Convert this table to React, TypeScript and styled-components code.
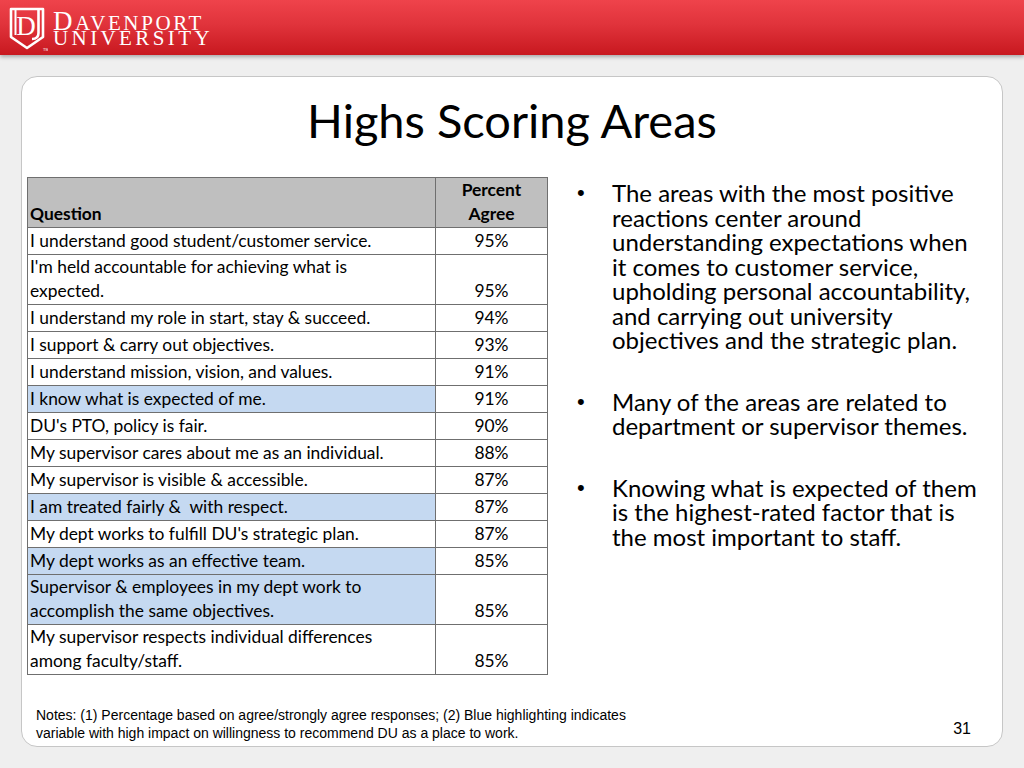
import React from "react";
import styled, { createGlobalStyle } from "styled-components";

const GlobalStyle = createGlobalStyle`
  html, body {
    margin: 0;
    padding: 0;
    background: #efefef;
  }
`;

interface Row {
  question: string[];
  percent: string;
  highlight?: boolean;
}

const rows: Row[] = [
  { question: ["I understand good student/customer service."], percent: "95%" },
  {
    question: ["I'm held accountable for achieving what is", "expected."],
    percent: "95%",
  },
  { question: ["I understand my role in start, stay & succeed."], percent: "94%" },
  { question: ["I support & carry out objectives."], percent: "93%" },
  { question: ["I understand mission, vision, and values."], percent: "91%" },
  { question: ["I know what is expected of me."], percent: "91%", highlight: true },
  { question: ["DU's PTO, policy is fair."], percent: "90%" },
  { question: ["My supervisor cares about me as an individual."], percent: "88%" },
  { question: ["My supervisor is visible & accessible."], percent: "87%" },
  {
    question: ["I am treated fairly &\u00a0 with respect."],
    percent: "87%",
    highlight: true,
  },
  { question: ["My dept works to fulfill DU's strategic plan."], percent: "87%" },
  {
    question: ["My dept works as an effective team."],
    percent: "85%",
    highlight: true,
  },
  {
    question: [
      "Supervisor & employees in my dept work to",
      "accomplish the same objectives.",
    ],
    percent: "85%",
    highlight: true,
  },
  {
    question: [
      "My supervisor respects individual differences",
      "among faculty/staff.",
    ],
    percent: "85%",
  },
];

const bullets: string[][] = [
  [
    "The areas with the most positive",
    "reactions center around",
    "understanding expectations when",
    "it comes to customer service,",
    "upholding personal accountability,",
    "and carrying out university",
    "objectives and the strategic plan.",
  ],
  ["Many of the areas are related to", "department or supervisor themes."],
  [
    "Knowing what is expected of them",
    "is the highest-rated factor that is",
    "the most important to staff.",
  ],
];

const Logo = () => (
  <LogoWrap>
    <svg width="42" height="46" viewBox="0 0 42 46">
      <path
        d="M5 3 H37 V31 L21 42 L5 31 Z"
        fill="none"
        stroke="#fff"
        strokeWidth="2.6"
        strokeLinejoin="round"
      />
      <path d="M9.5 3 V29" stroke="#fff" strokeWidth="2" />
      <path
        d="M32.5 3 V27 Q32.5 33 26 33"
        fill="none"
        stroke="#fff"
        strokeWidth="2.6"
      />
      <text
        x="20"
        y="29"
        fill="#fff"
        fontFamily="'Liberation Serif', serif"
        fontSize="27"
        textAnchor="middle"
      >
        D
      </text>
      <text
        x="37"
        y="45"
        fill="#fff"
        fontFamily="'Liberation Sans', sans-serif"
        fontSize="4"
      >
        TM
      </text>
    </svg>
    <Wordmark>
      <WordLine $spacing={2.6}>
        <BigCap>D</BigCap>AVENPORT
      </WordLine>
      <WordLine $spacing={3.4}>UNIVERSITY</WordLine>
    </Wordmark>
  </LogoWrap>
);

export default function App() {
  return (
    <Page>
      <GlobalStyle />
      <Header>
        <Logo />
      </Header>
      <Card>
        <Title>Highs Scoring Areas</Title>
        <Content>
          <Table>
            <colgroup>
              <col style={{ width: 408 }} />
              <col style={{ width: 112 }} />
            </colgroup>
            <thead>
              <tr>
                <HeadCell>Question</HeadCell>
                <HeadCell $center>
                  Percent
                  <br />
                  Agree
                </HeadCell>
              </tr>
            </thead>
            <tbody>
              {rows.map((r) => (
                <BodyRow key={r.question.join(" ")} $tall={r.question.length > 1}>
                  <Cell $highlight={r.highlight}>
                    {r.question.map((line, i) => (
                      <div key={i}>{line}</div>
                    ))}
                  </Cell>
                  <Cell $center>{r.percent}</Cell>
                </BodyRow>
              ))}
            </tbody>
          </Table>
          <BulletList>
            {bullets.map((b, i) => (
              <BulletItem key={i}>
                <BulletDot>•</BulletDot>
                <BulletText>
                  {b.map((line, j) => (
                    <div key={j}>{line}</div>
                  ))}
                </BulletText>
              </BulletItem>
            ))}
          </BulletList>
        </Content>
        <Footer>
          <Notes>
            Notes: (1) Percentage based on agree/strongly agree responses; (2) Blue
            highlighting indicates
            <br />
            variable with high impact on willingness to recommend DU as a place to
            work.
          </Notes>
          <PageNumber>31</PageNumber>
        </Footer>
      </Card>
    </Page>
  );
}

const Page = styled.div`
  width: 1024px;
  height: 768px;
  display: flex;
  flex-direction: column;
  background: #efefef;
  overflow: hidden;
`;

const Header = styled.header`
  height: 55px;
  flex-shrink: 0;
  display: flex;
  align-items: center;
  padding-left: 6px;
  background: linear-gradient(to bottom, #ef434b 0%, #e0333b 45%, #c8181f 100%);
  box-shadow: 0 2px 4px rgba(0, 0, 0, 0.3);
  position: relative;
  z-index: 1;
`;

const LogoWrap = styled.div`
  display: flex;
  align-items: center;
  gap: 5px;
  margin-top: 2px;
`;

const Wordmark = styled.div`
  display: flex;
  flex-direction: column;
  gap: 1px;
  color: #fff;
  font-family: "Liberation Serif", "DejaVu Serif", serif;
  margin-top: 1px;
`;

const WordLine = styled.div<{ $spacing?: number }>`
  font-size: 21px;
  line-height: 16px;
  height: 16px;
  letter-spacing: ${(p) => p.$spacing ?? 2.4}px;
  white-space: nowrap;
`;

const BigCap = styled.span`
  font-size: 27px;
`;

const Card = styled.main`
  margin: 21px 0 0 21px;
  width: 980px;
  height: 669px;
  background: #fff;
  border: 1px solid #c6c6c6;
  border-radius: 16px;
  display: flex;
  flex-direction: column;
  box-sizing: content-box;
`;

const Title = styled.h1`
  margin: 0;
  height: 100px;
  display: flex;
  align-items: center;
  justify-content: center;
  font-family: Lato, "Open Sans", sans-serif;
  font-weight: 400;
  font-size: 47px;
  color: #000;
  padding-bottom: 14px;
  box-sizing: border-box;
`;

const Content = styled.div`
  display: flex;
  align-items: flex-start;
  padding-left: 5px;
`;

const Table = styled.table`
  border-collapse: collapse;
  width: 521px;
  table-layout: fixed;
  font-family: Lato, "Open Sans", sans-serif;
  font-size: 17.4px;
  color: #000;
  border: 1px solid #6f6f6f;
`;

const HeadCell = styled.th<{ $center?: boolean }>`
  height: 49px;
  padding: 0 2px 1px;
  background: #bfbfbf;
  font-weight: 700;
  line-height: 24px;
  text-align: ${(p) => (p.$center ? "center" : "left")};
  vertical-align: bottom;
  border: 1px solid #6f6f6f;
  box-sizing: border-box;
`;

const BodyRow = styled.tr<{ $tall?: boolean }>`
  height: ${(p) => (p.$tall ? 49 : 27)}px;
`;

const Cell = styled.td<{ $center?: boolean; $highlight?: boolean }>`
  padding: 0 2px 1px;
  line-height: 24px;
  text-align: ${(p) => (p.$center ? "center" : "left")};
  vertical-align: bottom;
  background: ${(p) => (p.$highlight ? "#c5d9f1" : "#fff")};
  border: 1px solid #6f6f6f;
  white-space: nowrap;
`;

const BulletList = styled.ul`
  list-style: none;
  margin: 0;
  padding: 4px 0 0 29px;
  display: flex;
  flex-direction: column;
  gap: 37px;
  font-family: Lato, "Open Sans", sans-serif;
  font-size: 24px;
  line-height: 24.5px;
  color: #000;
`;

const BulletItem = styled.li`
  display: flex;
`;

const BulletDot = styled.span`
  width: 35px;
  flex-shrink: 0;
  font-family: "Liberation Sans", Arial, sans-serif;
  font-size: 22px;
`;

const BulletText = styled.div`
  white-space: nowrap;
`;

const Footer = styled.div`
  margin-top: auto;
  display: flex;
  justify-content: space-between;
  align-items: flex-end;
  padding: 0 31px 4px 14px;
`;

const Notes = styled.p`
  margin: 0;
  font-family: "Liberation Sans", Arial, sans-serif;
  font-size: 14px;
  line-height: 18px;
  color: #000;
`;

const PageNumber = styled.span`
  font-family: "Liberation Sans", Arial, sans-serif;
  font-size: 16px;
  line-height: 20px;
  color: #000;
  margin-bottom: 3px;
`;
